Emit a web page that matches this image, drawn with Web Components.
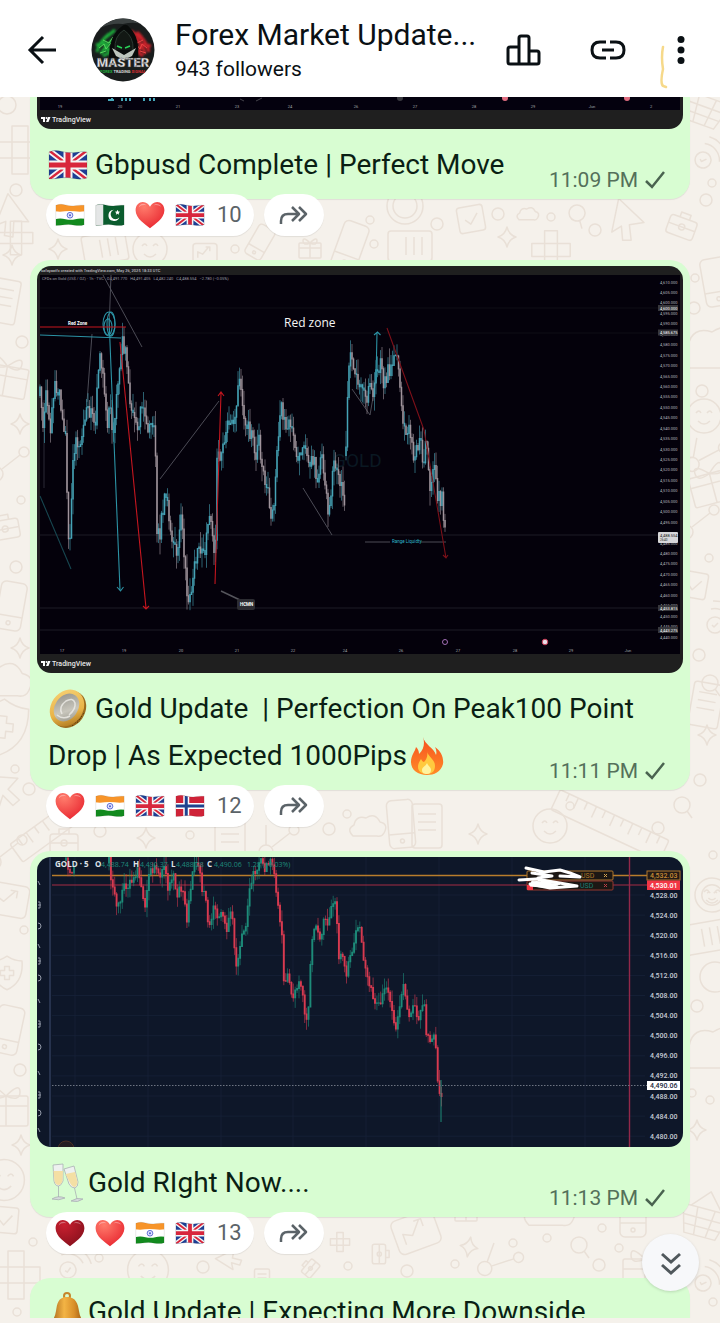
<!DOCTYPE html>
<html lang="en">
<head>
<meta charset="UTF-8">
<meta name="viewport" content="width=device-width, initial-scale=1">
<title>Forex Market Update</title>
<style>
    body {
        margin: 0;
        font-family: Roboto, "Noto Sans", sans-serif;
        color: #0a1014;
        background: #f5f1eb;
    }
</style>
</head>
<body>
<channel-page>
    <channel-header slot="header" name="Forex Market Update..." followers="943 followers"></channel-header>

    <channel-message time="11:09 PM" continued>
        <trading-chart slot="photo" kind="footer"></trading-chart>
        <emoji-glyph name="uk"></emoji-glyph> Gbpusd Complete | Perfect Move
        <reaction-bar slot="reactions" emojis="india pakistan heart uk" count="10"></reaction-bar>
    </channel-message>

    <channel-message time="11:11 PM">
        <trading-chart slot="photo" kind="zones"></trading-chart>
        <emoji-glyph name="coin"></emoji-glyph> Gold Update &nbsp;| Perfection On Peak100 Point Drop | As Expected 1000Pips<emoji-glyph name="fire"></emoji-glyph>
        <reaction-bar slot="reactions" emojis="heart india uk norway" count="12"></reaction-bar>
    </channel-message>

    <channel-message time="11:13 PM">
        <trading-chart slot="photo" kind="gold"></trading-chart>
        <emoji-glyph name="glasses"></emoji-glyph>Gold RIght Now....
        <reaction-bar slot="reactions" emojis="darkheart heart india uk" count="13"></reaction-bar>
    </channel-message>

    <channel-message>
        <emoji-glyph name="bell"></emoji-glyph>Gold Update | Expecting More Downside
    </channel-message>
</channel-page>

<script>
// ---------- emoji-glyph ----------
const FLAG = 'M1 7Q7 4.500 14 6.500T27 7.500T39 7V33Q33 35 26 33.500T13 33T1 34Z';

function flag(inner) {
    return `<clipPath id="f"><path d="${FLAG}"/></clipPath><g clip-path="url(#f)">${inner}</g>
        <path d="${FLAG}" fill="none" stroke="#000" stroke-opacity=".12"/>`;
}

function heart(light, dark) {
    return `<radialGradient id="h" cx=".3" cy=".2" r=".9"><stop offset="0" stop-color="${light}"/><stop offset="1" stop-color="${dark}"/></radialGradient>
        <path d="M20 37.500C14 32 .8 25 .8 13.500C.8 6.500 5.500 2.500 10.500 2.500C15 2.500 18.500 5.500 20 9C21.500 5.500 25 2.500 29.500 2.500C34.500 2.500 39.200 6.500 39.200 13.500C39.200 25 26 32 20 37.500Z" fill="url(#h)"/>
        <path d="M5 10Q6 5 11 5Q14 5 15 7Q8 6 5 10ZM25 7Q27 4.500 31 5.500Q34 6.500 35 9Q30 5.500 25 7Z" fill="#fff" opacity=".35"/>`;
}

const EMOJIS = {
    uk: flag(`<path fill="#1e3f94" d="M0 0h40v40H0z"/>
        <path d="M-1 4L41 36M41 4L-1 36" stroke="#f4f4f4" stroke-width="6"/>
        <path d="M-1 4L41 36M41 4L-1 36" stroke="#d8263c" stroke-width="2.500"/>
        <path d="M20 0V40M0 20H40" stroke="#f4f4f4" stroke-width="9"/>
        <path d="M20 0V40M0 20H40" stroke="#d8263c" stroke-width="5"/>`),
    india: flag(`<path fill="#fff" d="M0 0h40v40H0z"/><path fill="#f79429" d="M0 0h40v15Q33 16 26 15T13 15T0 15z"/>
        <path fill="#128a1e" d="M0 25.500Q7 24 14 25.500T27 25.500T40 25V40H0z"/>
        <circle cx="20" cy="20.300" r="3.800" fill="#dfe3ff" stroke="#3b49c8"/><circle cx="20" cy="20.300" r="1.200" fill="#3b49c8"/>`),
    pakistan: flag(`<path fill="#0b5c2e" d="M0 0h40v40H0z"/><path fill="#e4e6e6" d="M0 0h11v40H0z"/>
        <path fill="#fff" d="M25 13A7.500 7.500 0 1 0 32.500 23A6.500 6.500 0 1 1 25 13Z"/><path fill="#fff" d="M30 13l1 2.300 2.500.2-1.900 1.700.6 2.500-2.200-1.300-2.200 1.300.6-2.500-1.900-1.700 2.500-.2z"/>`),
    norway: flag(`<path fill="#cf2338" d="M0 0h40v40H0z"/><path d="M15 0V40M0 20H40" stroke="#fff" stroke-width="8"/>
        <path d="M15 0V40M0 20H40" stroke="#1f4390" stroke-width="4"/>`),
    heart: heart('#ff7b6b', '#e8252f'),
    darkheart: heart('#c8202f', '#86101c'),
    coin: `<linearGradient id="g" x1="0" x2="1" y2="1"><stop offset="0" stop-color="#f9d57a"/><stop offset=".6" stop-color="#e8b347"/><stop offset="1" stop-color="#9a6312"/></linearGradient>
        <linearGradient id="s" x1="0" x2="1" y2="1"><stop offset="0" stop-color="#8d8c86"/><stop offset=".6" stop-color="#c9c7bd"/><stop offset="1" stop-color="#8b8a80"/></linearGradient>
        <ellipse cx="21" cy="20.500" rx="16" ry="19.500" transform="rotate(35 21 20.500)" fill="#9c6b1d"/>
        <ellipse cx="19" cy="19" rx="16" ry="19.500" transform="rotate(35 19 19)" fill="url(#g)"/>
        <ellipse cx="18.500" cy="18.500" rx="11.500" ry="15" transform="rotate(35 18.500 18.500)" fill="url(#s)"/>
        <path d="M14 25Q10 18 18 12Q25 8 27 14Q28 20 21 26M9 26Q15 31 22 27" fill="none" stroke="#efeee8" stroke-width="1.500" opacity=".8"/>
        <path d="M24 37l10-9M29 34l7-10" stroke="#5c3b0b" stroke-dasharray="1.500 2"/>`,
    fire: `<linearGradient id="g" x2="0" y2="1"><stop offset="0" stop-color="#f6501f"/><stop offset="1" stop-color="#ff8b27"/></linearGradient>
        <path d="M16 1C18 9 27 12 29 19C30 16 29 13 28 11C34 15 37 22 36 28C34 36 27 39 20 39C11 39 4 34 4 26C4 19 8 16 9 11C11 13 12 15 12 18C17 13 18 7 16 1Z" fill="url(#g)"/>
        <path d="M20 15C21 21 28 23 28 30C28 36 24 38 20 38C14 38 11 35 11 31C11 27 13 25 14 23C15 25 16 26 17 26C20 23 21 19 20 15Z" fill="#ffc93f"/>
        <path d="M20 27C21 30 24 31 24 34C24 37 22 38 20 38C17 38 15 37 15 34C15 31 19 30 20 27Z" fill="#fff3a0"/>`,
    glasses: `<g stroke="#a9b0b4" stroke-width=".8"><path d="M5 2L15 1L15 18Q13 23 10.500 23Q7 23 6 18Z" fill="#eef1f0"/>
        <path d="M5.500 8L15 8L14.500 18Q13 22 10.500 22Q7.500 22 6.500 18Z" fill="#f4dfa4" stroke="none"/><path d="M10.500 23L10.500 34M4 36Q10 32 17 35Q11 38 4 36Z" fill="#d5dadb"/>
        <path d="M16 6L26 3L30 19Q30 24 27 25Q23 25 21 21Z" fill="#eef1f0"/><path d="M17.500 11L27 9L29.500 19Q29 23 27 24Q24 24 22 20Z" fill="#f4dfa4" stroke="none"/>
        <path d="M26.500 25L29 36M23 38Q29 34 35 36Q30 40 23 38Z" fill="#d5dadb"/></g>`,
    bell: `<linearGradient id="g" x2="1"><stop offset="0" stop-color="#a5641a"/><stop offset=".4" stop-color="#f3b445"/><stop offset=".7" stop-color="#d98f2a"/><stop offset="1" stop-color="#99550f"/></linearGradient>
        <circle cx="19" cy="4" r="3" fill="none" stroke="#c5852b" stroke-width="2"/>
        <path d="M19 5C28 5 30 12 31 19Q32 26 36 30Q20 36 3 30Q7 26 8 19C9 12 10 5 19 5Z" fill="url(#g)"/><ellipse cx="19" cy="34" rx="5" ry="3" fill="#8b4d10"/>`
};

class EmojiGlyph extends HTMLElement {
    constructor() {
        super();
        this.attachShadow({ mode: 'open' });
    }

    connectedCallback() {
        this.shadowRoot.innerHTML = `
            <style>
                :host {
                    display: inline-block;
                    width: var(--emoji-size, 40px);
                    height: var(--emoji-size, 40px);
                    vertical-align: middle;
                }

                svg {
                    display: block;
                    width: 100%;
                    height: 100%;
                }
            </style>
            <svg viewBox="0 0 40 40" aria-hidden="true">${EMOJIS[this.getAttribute('name')] || ''}</svg>
        `;
    }
}

customElements.define('emoji-glyph', EmojiGlyph);

// ---------- trading-chart ----------
function makeRandom(seed) {
    return () => {
        seed = (seed * 16807) % 2147483647;
        return seed / 2147483647;
    };
}

// walks along the price points and draws one candle per step
function candles(points, options) {
    const random = makeRandom(options.seed);
    const list = points.trim().split(/\s+/).map(p => p.split(',').map(Number));
    const last = list[list.length - 1][0];
    const bias = options.bias || 0;
    let out = '';
    let index = 0;
    let open = list[0][1];
    for (let x = list[0][0]; x <= last; x += options.step) {
        while (index < list.length - 2 && list[index + 1][0] <= x) index++;
        const [x1, y1] = list[index];
        const [x2, y2] = list[index + 1];
        const close = y1 + (y2 - y1) * Math.min(1, (x - x1) / (x2 - x1)) + (random() - 0.5) * options.noise;
        const top = Math.min(open, close);
        const bottom = Math.max(open, close);
        const high = top - random() * options.wick;
        const low = bottom + random() * options.wick;
        const color = close < open + bias ? options.up : options.down;
        out += `<path d="M${x.toFixed(1)} ${high.toFixed(1)}V${low.toFixed(1)}" stroke="${color}" stroke-width=".8" opacity=".75"/>
            <path d="M${x.toFixed(1)} ${top.toFixed(1)}V${(bottom + 1).toFixed(1)}" stroke="${color}" stroke-width="${options.body}"/>`;
        open = close;
    }
    return out;
}

function tvLogo(y) {
    return `<path d="M41 ${y - 5}h4v5h-2v-3h-2zM48 ${y - 5}h2.500l-2 5h-2.500z" fill="#fff"/><circle cx="46.500" cy="${y - 4}" r="1" fill="#fff"/>
        <text x="52" y="${y}" font-size="7" font-weight="500" fill="#e8e8e8">TradingView</text>`;
}

function dates(y, labels) {
    return labels.map(([x, t]) => `<text x="${x}" y="${y}" font-size="4" fill="#a5a5ad" text-anchor="middle">${t}</text>`).join('');
}

function footerChart() {
    return `<svg viewBox="37 97 646 32" role="img" aria-label="GBPUSD chart">
        <path fill="#1f1f1f" d="M37 97h646v32H37z"/><path fill="#04010e" d="M40 97h640v13H40z"/>
        <path d="M108 100h6M112 98v2M122 98v3M126 98v3M130 98v3M144 98v3M150 98v3M154 98v3" stroke="#45a9bb" stroke-width="2"/>
        <path d="M240 99l4 2M256 101l6-3" stroke="#56565c" stroke-width=".8"/>
        <circle cx="505" cy="98" r="3" fill="#e06d80"/><circle cx="627" cy="98" r="3" fill="#e06d80"/><circle cx="400" cy="98" r="3" fill="#3a3a40"/>
        ${dates(108, [[60, 19], [120, 20], [178, 21], [237, 23], [290, 24], [356, 26], [415, 27], [474, 28], [533, 29], [592, 'Jun'], [651, 2]])}
        ${tvLogo(122)}
    </svg>`;
}

function zonesChart() {
    const price = `40,395 43,425 46,382 50,430 55,388 59,392 62,415 66,430 68,548 70,535 73,460 76,440 80,445 84,415 88,402 95,432 98,375 101,355
        105,400 108,425 110,400 113,438 117,390 122,335 126,355 129,390 133,415 137,430 143,402 147,432 151,420 155,430 157,530 160,532
        165,490 169,515 173,542 177,552 181,510 184,560 188,596 191,590 196,560 200,545 204,555 207,530 210,512 213,535 215,560 217,450 221,455
        226,425 229,418 234,430 240,372 243,410 248,422 253,445 256,460 259,442 262,462 266,485 271,512 275,492 279,420 282,405 285,425
        290,422 295,445 299,460 304,448 308,462 314,455 317,478 321,455 325,480 329,515 333,468 336,462 340,485 345,500`;
    const rally = `346,455 347,400 349,362 353,358 357,380 362,382 366,398 370,390 373,398 376,368 380,362 383,380 387,375 392,362 398,358
        400,395 403,425 407,440 410,428 413,455 418,445 421,432 423,460 427,442 430,495 434,470 438,495 442,500 445,525 446,545`;
    const style = { step: 1.5, noise: 17, wick: 16, body: 1.5, bias: 4, up: '#46a3b6', down: '#a0949c' };
    let scale = '';
    for (let i = 0; i < 35; i++) {
        // the current price tag sits on this row
        if (i === 24) continue;
        const value = (4610 - i * 5).toLocaleString('en-US');
        scale += `<text x="660" y="${(283.5 + i * 10.44).toFixed(1)}">${value}.000</text>`;
    }
    const tags = [[308, '4,600.000'], [332.5, '4,585.675'], [608, '4,453.815'], [630, '4,443.275']];
    return `<svg viewBox="37 266 646 407" role="img" aria-label="Gold chart with red zone">
        <path fill="#1f1f1f" d="M37 266h646v407H37z"/><path fill="#04010b" d="M40 275h640v379H40z"/>
        <text x="41" y="272" font-size="4" font-weight="500" fill="#bcbcc0">safayaatfx created with TradingView.com, May 26, 2025 18:33 UTC</text>
        <text x="42" y="280" font-size="4" fill="#9c9ca4">CFDs on Gold (US$ / OZ) · 1h · TVC &nbsp; O4,491.770 &nbsp; H4,491.405 &nbsp; L4,482.240 &nbsp; C4,488.554 &nbsp; −2.780 (−0.05%)</text>
        <path d="M40 535h620M40 608h620M40 630h620" stroke="#25252d" stroke-width=".8"/><path d="M40 308h620M40 333h620" stroke="#121219" stroke-width=".8"/>
        <text x="333" y="467" font-size="19" fill="#0a1822">GOLD</text>
        <g fill="none" stroke="#55555f" stroke-width=".9">
            <path d="M103 275L142 347M111 275L109 330M160 479L219 401M92 334L87 402M352 389L370 415L376 380M303 488L332 535M365 542H390M421 542H446"/>
            <path d="M44 400V488" stroke="#30303a"/>
        </g>
        ${candles(price, { ...style, seed: 77 })}
        ${candles(rally, { ...style, seed: 15 })}
        <g fill="none" stroke="#2c93a5" stroke-width="1.100">
            <path d="M40 335L121 338M109 318L120 590M117 587l3.500 4 3-4"/><path d="M40 496L71 569" stroke="#174650"/><path d="M376 380L377 332M374 335l3.500-3 3 3"/>
            <ellipse cx="109" cy="324" rx="6" ry="12"/><ellipse cx="108" cy="327" rx="4" ry="8"/><ellipse cx="111" cy="324" rx="4" ry="12"/>
        </g>
        <g fill="none" stroke="#c5161f" stroke-width="1.100">
            <path d="M40 327H126M120 342L146 608M143 606l3 3 3-3M215 584L221 393M218 396l3-4 3 4"/>
            <path d="M387 328L424 430M424 430L446 558M443 555l3 3 2-3" stroke="#7c1019"/>
        </g>
        <text x="68" y="325" font-size="4.500" font-weight="700" fill="#fff">Red Zone</text>
        <text x="284" y="327" font-size="12" font-weight="500" font-family="Open Sans, sans-serif" fill="#f5f5f5">Red zone</text>
        <text x="392" y="543" font-size="4.500" fill="#2fb6cb">Range Liquidty</text>
        <path d="M221 591L240 600" stroke="#55555c" stroke-width="1.500"/><rect x="237" y="599" width="18" height="11" rx="2" fill="#2c2c32"/>
        <text x="240" y="606" font-size="4.500" font-weight="700" fill="#fff">HCMN</text>
        <g font-size="4" fill="#b4b4bb">${scale}</g>
        <g font-size="4" fill="#fff">${tags.map(([y, t]) => `<rect x="658" y="${y - 3}" width="20" height="6" fill="#37373c"/><text x="660" y="${y + 1.5}">${t}</text>`).join('')}</g>
        <rect x="658" y="532" width="20" height="11" rx="1" fill="#d6d6d9"/><text x="660" y="536.500" font-size="4" fill="#222">4,488.554</text><text x="660" y="541" font-size="3" fill="#222">26:40</text>
        <circle cx="445" cy="642" r="2.500" fill="none" stroke="#a36fb5"/><circle cx="545" cy="642" r="2.800" fill="#e9dfe8" stroke="#c63b55"/>
        ${dates(652, [[62, 17], [124, 19], [181, 20], [237, 21], [293, 22], [345, 24], [401, 26], [458, 27], [515, 28], [571, 29], [628, 'Jun']])}
        ${tvLogo(666)}
    </svg>`;
}

function goldChart() {
    const price = `109,862 112,885 115,900 118,908 122,890 126,888 129,882 134,880 138,864 141,885 145,905 150,872 155,868 160,878 165,870 168,888 173,872
        176,898 182,885 187,920 190,890 193,866 199,860 202,892 205,895 209,932 214,908 218,918 223,912 227,928 231,908 234,938 237,968 241,935
        245,930 248,900 251,885 255,868 260,860 266,868 273,862 276,890 279,912 282,935 284,983 288,973 293,1000 298,982 302,985 306,1024
        308,1010 310,975 312,938 316,925 321,940 325,915 329,922 333,900 336,905 339,960 343,952 346,980 350,958 355,942 357,924
        361,935 365,965 369,985 374,1000 379,1008 383,995 387,988 391,1008 395,1030 399,1008 404,986 409,1016 414,1006 420,1016 424,1002
        426,1030 431,1043 434,1034 437,1065 439,1097 443,1088`;
    const icons = [883, 905, 926, 946, 961, 978, 1001, 1024, 1047, 1073, 1095, 1113, 1130];
    let scale = '';
    let grid = '';
    for (let i = 0; i < 13; i++) {
        const y = 895 + i * 20.1;
        const value = (4528 - i * 4).toLocaleString('en-US');
        scale += `<text x="650" y="${(y + 2.5).toFixed(1)}">${value}.00</text>`;
        grid += `M52 ${y.toFixed(1)}H645`;
    }
    return `<svg viewBox="37 857 646 290" role="img" aria-label="Gold five minute chart">
        <path fill="#0e1729" d="M37 857h646v290H37z"/>
        <path d="${grid}M75 857v290M148 857v290M221 857v290M293 857v290M366 857v290M439 857v290M512 857v290M585 857v290" stroke="#172238" stroke-width=".8"/>
        <path d="M50 857v290" stroke="#26324d" stroke-width="2"/>
        <g fill="none" stroke="#9299a8">${icons.map((y, i) => i % 3 === 2 ? `<path d="M38 ${y - 3}a3 3 0 0 1 0 6"/>` : i % 3 === 1 ? `<path d="M38 ${y - 3}h2v6h-2M38 ${y}h3"/>` : `<path d="M38 ${y - 2}l2 4"/>`).join('')}</g>
        <path d="M52 875.500H647" stroke="#b87d2c" stroke-width="1.400"/><path d="M52 885H647" stroke="#a52c45"/>
        <path d="M629.500 857V1147" stroke="#93284a" stroke-width="1.400"/>
        ${candles('66,860 68,868 71,875 73,870 75,862', { seed: 8, step: 2, noise: 5, wick: 10, body: 1.5, up: '#1d8b79', down: '#d83a50' })}
        ${candles(price, { seed: 91, step: 1.9, noise: 11, wick: 11, body: 1.9, up: '#1d8b79', down: '#d83a50' })}
        <path d="M441 1080V1122" stroke="#1d8b79"/>
        <path d="M52 1085.500H647" stroke="#6d7482" stroke-dasharray="1.500 1.500"/>
        <g font-size="8" font-family="Open Sans, sans-serif"><text x="55" y="867" font-weight="700" fill="#dfe2e8">GOLD · 5</text>
            <g font-weight="700" fill="#dfe2e8"><text x="95" y="867">O</text><text x="133" y="867">H</text><text x="171" y="867">L</text><text x="207" y="867">C</text></g>
            <g font-size="7" fill="#1f8a7c"><text x="101" y="867">4,488.74</text><text x="140" y="867">4,490.37</text><text x="176" y="867">4,488.28</text><text x="214" y="867">4,490.06</text><text x="247" y="867">1.28 (+0.03%)</text></g></g>
        <g fill="#1c1714"><rect x="527" y="871" width="86" height="9" rx="1" stroke="#ad762d"/><rect x="527" y="881" width="86" height="9" rx="1" stroke="#93392f"/></g>
        <text x="581" y="878" font-size="7" fill="#b07a2a">USD</text><text x="580" y="888" font-size="7" fill="#1b7f72">USD</text>
        <path d="M604 874l3 3M607 874l-3 3" stroke="#d7a552"/><path d="M604 884l3 3M607 884l-3 3" stroke="#c04047"/>
        <path d="M527 885h6v5h-6z" fill="#f23645"/>
        <path d="M526 868L544 872L560 870L570 873L580 877L560 876M532 873L552 876L538 878M519 880L536 879L577 886L550 888L530 884L548 882" fill="none" stroke="#fff" stroke-width="3" stroke-linecap="round" stroke-linejoin="round"/>
        <path d="M532 881L560 884L552 888L530 886Z" fill="#fff" stroke="#fff"/>
        <g font-size="7" font-weight="500" fill="#c5cad5">${scale}
            <rect x="647" y="871" width="33" height="9" fill="#231a16" stroke="#ad762d"/><text x="650" y="878" fill="#c98c35">4,532.03</text>
            <rect x="647" y="880.500" width="33" height="9.500" fill="#f23645"/><text x="650" y="888" fill="#fff">4,530.01</text>
            <rect x="647" y="1081" width="33" height="9" fill="#fff"/><text x="650" y="1088" fill="#222b3d">4,490.06</text></g>
        <circle cx="66" cy="1149" r="8" fill="#241d22" stroke="#4b3025"/>
    </svg>`;
}

class TradingChart extends HTMLElement {
    constructor() {
        super();
        this.attachShadow({ mode: 'open' });
    }

    connectedCallback() {
        const charts = { footer: footerChart, zones: zonesChart, gold: goldChart };
        this.shadowRoot.innerHTML = `
            <style>
                :host {
                    display: block;
                    border-radius: var(--photo-radius, 14px);
                    overflow: hidden;
                }

                svg {
                    display: block;
                    width: 100%;
                    height: auto;
                    font-family: Roboto, sans-serif;
                }
            </style>
            ${charts[this.getAttribute('kind')]()}
        `;
    }
}

customElements.define('trading-chart', TradingChart);

// ---------- reaction-bar ----------
class ReactionBar extends HTMLElement {
    constructor() {
        super();
        this.attachShadow({ mode: 'open' });
    }

    connectedCallback() {
        const emojis = this.getAttribute('emojis').split(' ');
        this.shadowRoot.innerHTML = `
            <style>
                :host {
                    display: flex;
                    gap: 10px;
                    margin-top: -5px;
                    padding-left: 16px;
                    position: relative;
                    --emoji-size: 30px;
                }

                button {
                    display: flex;
                    align-items: center;
                    justify-content: center;
                    gap: 10px;
                    height: 42px;
                    padding: 0 12px 0 9px;
                    border: 0;
                    border-radius: 21px;
                    background: white;
                    box-shadow: 0 1px 1px rgba(0,0,0,0.08);
                    font: 22px/42px Roboto, sans-serif;
                    color: #5b6368;
                }

                .count {
                    margin-left: 2px;
                }

                .forward {
                    width: 60px;
                    padding: 0;
                }
            </style>
            <button type="button">
                ${emojis.map(name => `<emoji-glyph name="${name}"></emoji-glyph>`).join('')}
                <span class="count">${this.getAttribute('count')}</span>
            </button>
            <button type="button" class="forward" aria-label="Forward">
                <svg width="30" height="24" viewBox="0 0 30 24" fill="none" stroke="#5b6368" stroke-width="2.500" stroke-linejoin="round">
                    <path d="M2 21V18Q2 11 9 11H20M13 4L20 11L13 18M20 4L27 11L20 18"/>
                </svg>
            </button>
        `;
    }
}

customElements.define('reaction-bar', ReactionBar);

// ---------- channel-message ----------
class ChannelMessage extends HTMLElement {
    constructor() {
        super();
        this.attachShadow({ mode: 'open' });
    }

    connectedCallback() {
        const time = this.getAttribute('time');
        this.shadowRoot.innerHTML = `
            <style>
                :host {
                    display: block;
                    flex: none;
                }

                .bubble {
                    position: relative;
                    padding: 6px 7px 11px;
                    border-radius: 20px;
                    background: #d8fdd2;
                    box-shadow: 0 1px 1px rgba(0,0,0,0.08);
                }

                /* the top of this bubble is scrolled under the header */
                :host([continued]) .bubble {
                    padding-top: 0;
                    border-radius: 0 0 20px 20px;
                    --photo-radius: 0 0 14px 14px;
                }

                .text {
                    margin: 0;
                    padding: 12px 11px 0;
                    font-size: 28px;
                    line-height: 47px;
                    color: #0a1f14;
                }

                :host(:not([time])) .text {
                    padding-top: 4px;
                }

                /* keeps emoji from making its line taller */
                ::slotted(emoji-glyph) {
                    margin: -4px 0 0;
                }

                .meta {
                    position: absolute;
                    right: 25px;
                    bottom: 6px;
                    display: flex;
                    align-items: center;
                    gap: 7px;
                    font-size: 21px;
                    line-height: 26px;
                    color: #54705a;
                }
            </style>
            <div class="bubble">
                <slot name="photo"></slot>
                <p class="text"><slot></slot></p>
                ${time ? `<div class="meta"><time>${time}</time>
                    <svg width="20" height="20" viewBox="0 0 20 20" fill="none" stroke="#4a6350" stroke-width="2.500" aria-label="Sent"><path d="M1 11L7 17L19 2"/></svg>
                </div>` : ''}
            </div>
            <slot name="reactions"></slot>
        `;
    }
}

customElements.define('channel-message', ChannelMessage);

// ---------- channel-header ----------
class ChannelHeader extends HTMLElement {
    constructor() {
        super();
        this.attachShadow({ mode: 'open' });
    }

    connectedCallback() {
        this.shadowRoot.innerHTML = `
            <style>
                :host {
                    display: block;
                    flex: none;
                    background: white;
                }

                header {
                    position: relative;
                    display: flex;
                    align-items: center;
                    box-sizing: border-box;
                    height: 97px;
                    padding: 2px 19px 0 22px;
                }

                button {
                    flex: none;
                    width: 40px;
                    height: 40px;
                    padding: 0;
                    border: 0;
                    background: none;
                    color: #0a1014;
                }

                svg {
                    display: block;
                }

                .avatar {
                    flex: none;
                    margin: 0 20px 0 29px;
                }

                .info {
                    flex: 1;
                    min-width: 0;
                }

                h1 {
                    margin: 0 0 2px;
                    font-size: 30px;
                    font-weight: 400;
                    line-height: 36px;
                    white-space: nowrap;
                }

                p {
                    margin: 0;
                    font-size: 21px;
                    line-height: 28px;
                }

                .link {
                    margin: 0 33px 0 44px;
                }

                .scribble {
                    position: absolute;
                    right: 52px;
                    top: 45px;
                }
            </style>
            <header>
                <button type="button" aria-label="Back">
                    <svg width="40" height="40" viewBox="0 0 40 40" fill="none" stroke="currentColor" stroke-width="3"><path d="M34 20H8M21 7L8 20L21 33"/></svg>
                </button>
                <svg class="avatar" width="64" height="64" viewBox="0 0 64 64" role="img" aria-label="Channel picture">
                    <clipPath id="c"><circle cx="32" cy="32" r="31.500"/></clipPath>
                    <filter id="b"><feGaussianBlur stdDeviation="1.200"/></filter>
                    <g clip-path="url(#c)">
                        <path fill="#191d1d" d="M0 0h64v64H0z"/>
                        <path d="M0 0h64v12Q50 2 32 6Q10 4 0 20Z" fill="#3b4141"/>
                        <g filter="url(#b)" fill="none" stroke-width="3">
                            <path d="M6 34Q8 24 18 16M10 36Q14 28 22 22M14 20L24 12M5 27L14 25L16 32L24 30M12 38L20 34" stroke="#1fae3a"/>
                            <path d="M58 34Q56 24 46 14M54 36Q52 26 44 20M40 13L52 22M60 28L50 26L48 34M52 38L44 32" stroke="#cc2229"/>
                        </g>
                        <path d="M8 30l5-4 2 5 5-6M12 22l6 3 4-6M9 35l6-2" stroke="#55d75c" fill="none"/>
                        <path d="M56 30l-5-4-2 5-5-6M52 22l-6 3-4-6M55 35l-6-2" stroke="#ec4545" fill="none"/>
                        <path d="M18 40Q18 18 30 9Q35 4 39 10Q49 20 47 40Z" fill="#080b0a"/>
                        <path d="M24 32Q23 18 33 12Q43 19 42 32" fill="#121814" stroke="#2c3932"/>
                        <path d="M26 28l5 2M39 28l-5 2" stroke="#2ad158" stroke-width="1.500"/>
                        <path d="M21 30L33 37L45 30L41 38L33 42L25 38Z" fill="#bdc5bd"/>
                        <text x="32" y="49" text-anchor="middle" font-size="13" font-weight="900" fill="#e4e4e4" stroke="#343434" stroke-width=".3">MASTER</text>
                        <text x="32" y="55" text-anchor="middle" font-size="4" font-weight="700"><tspan fill="#24b23e">FOREX</tspan> <tspan fill="#d8d8d8">TRADING</tspan> <tspan fill="#d82e33">SIGNAL</tspan></text>
                    </g>
                </svg>
                <div class="info">
                    <h1>${this.getAttribute('name')}</h1>
                    <p>${this.getAttribute('followers')}</p>
                </div>
                <button type="button" aria-label="Statistics">
                    <svg width="40" height="40" viewBox="0 0 40 40" fill="none" stroke="currentColor" stroke-width="3" stroke-linejoin="round"><path d="M4 19Q4 17 6 17H15V34H6Q4 34 4 32ZM15 34V8Q15 6 17 6H23Q25 6 25 8V34ZM25 21H33Q35 21 35 23V32Q35 34 33 34H25Z"/></svg>
                </button>
                <button type="button" class="link" aria-label="Copy link">
                    <svg width="40" height="40" viewBox="0 0 40 40" fill="none" stroke="currentColor" stroke-width="3"><path d="M18 12H12Q4 12 4 20T12 28H18M22 12H28Q36 12 36 20T28 28H22M14 20H26"/></svg>
                </button>
                <button type="button" aria-label="More options">
                    <svg width="40" height="40" viewBox="0 0 40 40" fill="currentColor"><circle cx="20" cy="9.500" r="3.500"/><circle cx="20" cy="20" r="3.500"/><circle cx="20" cy="30.500" r="3.500"/></svg>
                </button>
                <svg class="scribble" width="8" height="44" viewBox="0 0 8 44" fill="none" stroke="#f6d98a" stroke-width="2.500" stroke-linecap="round"><path d="M3 2Q1 12 3 24Q0 38 3 41L6 42"/></svg>
            </header>
        `;
    }
}

customElements.define('channel-header', ChannelHeader);

// ---------- doodle-wallpaper ----------
const DOODLES = {
    dot: '<circle r="4"/>',
    ring: '<circle r="6"/>',
    cross: '<path d="M-8-24h16v16h16V8H8v16H-8V8h-16V-8h16zM-8-8H8V8H-8z"/>',
    star: '<path d="M0-10Q2-2 9 0Q2 2 0 10Q-2 2-9 0Q-2-2 0-10Z"/>',
    search: '<circle r="8"/><path d="M5 6l5 7"/>',
    check: '<rect x="-13" y="-13" width="26" height="26" rx="3"/><path d="M-6 0l5 5 8-10"/>',
    bag: '<rect x="-14" y="-8" width="28" height="19" rx="3"/><path d="M-5-8v-5H5v5M-14 1H14"/><circle cy="1" r="3"/>',
    doc: '<rect x="-15" y="-22" width="30" height="44" rx="3"/><path d="M-9-12H9M-9-4H9M-9 4H9"/>',
    shield: '<path d="M0-28Q12-20 25-20Q28 15 0 28Q-28 15-25-20Q-12-20 0-28Z"/><path d="M-4-11h8v7h7v8H4v7h-8V4h-7v-8h7z"/>',
    cloud: '<path d="M-30 16Q-44 2-28-6Q-24-26-4-20Q14-32 24-12Q42-8 32 10Q28 18 18 16Z"/>',
    chart: '<rect x="-20" y="-16" width="40" height="32" rx="5"/><path d="M-12 8V-2l8 4 10-12M1-10h7v7"/>',
    wave: '<circle r="8"/><path d="M-4-16A17 17 0 0 1 16-4M-2-24A25 25 0 0 1 24-2M-3 0l2 2 4-4"/>',
    face: '<circle r="17"/><path d="M-8-3q3-4 5 0M3-3q3-4 5 0M-6 5Q0 11 6 5"/>',
    gift: '<rect x="-22" y="-14" width="44" height="30" rx="2"/><path d="M-22-4h44M0-14v30M0-14Q-14-28-14-18T0-14Q14-28 14-18T0-14"/>',
    cursor: '<path d="M-14-20L18-6L5 1L12 15L4 18L-2 5L-9 14Z"/>',
    ruler: '<rect x="-60" y="-11" width="120" height="22" rx="2"/><path d="M-50-11v8M-40-11v12M-30-11v8M-20-11v12M-10-11v8M0-11v12M10-11v8M20-11v12M30-11v8M40-11v12M50-11v8"/>',
    phone: '<rect x="-13" y="-24" width="26" height="48" rx="5"/><circle cy="17" r="2"/><path d="M-13 10H13"/>',
    nodes: '<circle cx="-14" cy="12" r="7"/><circle cx="14" cy="-10" r="5"/><path d="M-8 7L10-7M-14 5V-15"/>',
    basket: '<path d="M-24-6H24L16 22H-16ZM-22 4H21M-19 13H18M-9-6l3 28M9-6L6 22M-16-6L0-24L16-6"/>'
};

// name, x, y, rotation, scale
const PLACES = `cross 20 150 0; wave 703 160 20; basket 706 103 20; ring 16 190 0; cursor 10 218 30; star 12 255 0; dot 712 183 0; ring 706 200 0;
    ring 405 206 0 2; ring 405 206 0 3; bag 682 226 20; check 471 219 -10; ring 498 214 0; cloud 528 215 0 .3; dot 551 217 0; search 577 213 20; cursor 625 222 20;
    star 507 237 0; cross 551 250 0 .8; ring 437 224 0; doc 410 246 90; dot 370 220 0; ring 595 230 0; dot 374 244 0; phone 350 246 20; cross 16 238 0 .7;
    dot 695 278 0; phone 716 282 -10; ring 694 308 0; cloud 716 352 0; ring 702 391 0; face 704 416 0; nodes 708 455 10; gift 713 487 -15; nodes 700 520 0;
    dot 709 558 0; check 694 585 10; wave 715 625 0; ring 699 655 0; search 710 683 0; doc 3 301 10; ring 22 342 0; gift 5 380 10; star 20 424 0; nodes 10 462 0;
    dot 21 500 0; bag 5 528 -10; ring 16 567 0; phone 11 606 10; star 20 648 0; cloud 3 683 0 .8; shield 2 727 5; dot 15 769 0; ring 29 789 0; cursor 3 790 -20;
    ruler 65 818 -36; ring 100 831 0; star 146 838 0; doc 230 838 0; ring 329 829 0; phone 401 824 -5; doc 427 826 0; star 478 834 0; face 550 826 0; dot 570 806 0;
    ruler 610 825 25; ring 658 828 0; search 682 805 0; ring 700 780 0; star 707 735 0; dot 347 814 0; cloud 368 828 0 .5; nodes 8 850 0; chart 8 900 10; dot 24 930 0; shield 7 973 0 .6;
    phone 8 1030 12; ring 20 1070 0; gift 6 1110 0; star 21 1145 0; face 4 1180 0 1.200; check 5 1220 5; dot 33 1242 0; cross 16 1275 0; dot 17 1312 0;
    dot 713 855 0; face 712 895 0; face 712 895 0 .6; doc 707 937 80; ring 715 977 0 2.500; ring 697 1006 0; cloud 717 1052 0 1; dot 692 1093 0; dot 710 1100 0; star 697 1130 0; basket 705 1215 15;
    wave 703 1283 20; dot 713 1302 0; search 579 1245 0; dot 602 1228 0; dot 513 1243 0; dot 547 1238 0; dot 619 1248 0; ring 599 1265 0; chart 416 1232 -20 1.100; star 469 1247 10;
    bag 380 1254 90 .7; gift 466 1213 0 .5; phone 633 1213 0; nodes 502 1262 20; ring 407 1271 0; dot 455 1264 0; gift 645 1273 0; cloud 550 1214 0 .7; wave 68 1270 -10 1; cursor 230 1260 -50 .6;
    ring 203 1267 0; face 148 1270 0 1.200; bag 310 1268 -50 .6; cross 340 1242 0 .4; dot 348 1266 0; dot 99 1258 0; doc 262 1280 0 .5; ring 100 1225 0; phone 260 242 30 .7; face 150 249 0;
    star 58 249 0; doc 105 248 80; chart 205 253 0 .6; dot 235 249 0; gift 310 250 0 .5; bag 64 842 0; nodes 280 840 0; dot 190 835 0; ring 7 105 0 1.500; doc 706 705 10`;

class DoodleWallpaper extends HTMLElement {
    constructor() {
        super();
        this.attachShadow({ mode: 'open' });
    }

    connectedCallback() {
        const shapes = PLACES.split(';').map(place => {
            const [name, x, y, rotation, scale = 1] = place.trim().split(/\s+/);
            return `<g transform="translate(${x} ${y}) rotate(${rotation}) scale(${scale})" stroke-width="${(1.5 / scale).toFixed(2)}">${DOODLES[name]}</g>`;
        });
        this.shadowRoot.innerHTML = `
            <style>
                :host {
                    display: block;
                    position: absolute;
                    inset: 0;
                    overflow: hidden;
                }
            </style>
            <svg width="100%" height="100%" fill="none" stroke="#e9e0d7" stroke-linejoin="round" aria-hidden="true">${shapes.join('')}</svg>
        `;
    }
}

customElements.define('doodle-wallpaper', DoodleWallpaper);

// ---------- channel-page ----------
class ChannelPage extends HTMLElement {
    constructor() {
        super();
        this.attachShadow({ mode: 'open' });
    }

    connectedCallback() {
        this.shadowRoot.innerHTML = `
            <style>
                :host {
                    display: flex;
                    flex-direction: column;
                    position: relative;
                    height: 100vh;
                    overflow: hidden;
                }

                main {
                    flex: 1;
                    min-height: 0;
                    display: flex;
                    flex-direction: column;
                    gap: 24px;
                    position: relative;
                    margin-bottom: 5px;
                    padding: 0 30px;
                    overflow: hidden;
                }

                ::slotted([slot="header"]) {
                    position: relative;
                }

                .jump {
                    position: absolute;
                    right: 21px;
                    bottom: 32px;
                    width: 57px;
                    height: 57px;
                    padding: 0;
                    border: 0;
                    border-radius: 50%;
                    background: #f7f8fa;
                    box-shadow: 0 1px 3px rgba(0,0,0,0.15);
                }

                .jump svg {
                    display: block;
                    margin: auto;
                }
            </style>
            <doodle-wallpaper></doodle-wallpaper>
            <slot name="header"></slot>
            <main><slot></slot></main>
            <button type="button" class="jump" aria-label="Jump to latest">
                <svg width="24" height="26" viewBox="0 0 24 26" fill="none" stroke="#50585c" stroke-width="3"><path d="M3 4L12 12L21 4M3 15L12 23L21 15"/></svg>
            </button>
        `;
    }
}

customElements.define('channel-page', ChannelPage);
</script>
</body>
</html>
